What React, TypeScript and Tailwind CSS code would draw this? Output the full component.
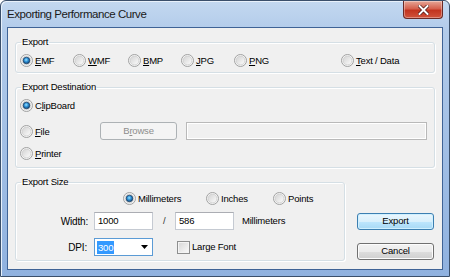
import React, { useId } from "react";

function Radio({ checked }: { checked?: boolean }) {
  const id = useId().replace(/[^a-zA-Z0-9]/g, "");
  return (
    <svg width="13" height="13" viewBox="0 0 13 13" className="shrink-0">
      <defs>
        <linearGradient id={`g${id}`} x1="0" y1="0" x2="1" y2="1">
          <stop offset="0" stopColor="#d2d2d2" />
          <stop offset="1" stopColor="#fdfdfd" />
        </linearGradient>
        <radialGradient id={`d${id}`} cx="0.45" cy="0.4" r="0.65">
          <stop offset="0" stopColor="#9be6ff" />
          <stop offset="0.45" stopColor="#2d8fd6" />
          <stop offset="1" stopColor="#0e3763" />
        </radialGradient>
      </defs>
      <circle cx="6.5" cy="6.5" r="6" fill="#f6f6f6" stroke="#a0a1a1" />
      <circle cx="6.5" cy="6.5" r="4.4" fill={`url(#g${id})`} stroke="#cdcdcd" strokeWidth="0.8" />
      {checked && <circle cx="6.5" cy="6.5" r="3.3" fill={`url(#d${id})`} stroke="#183d63" strokeWidth="0.7" />}
    </svg>
  );
}

function RadioItem({ checked, children, w }: { checked?: boolean; children: React.ReactNode; w: string }) {
  return (
    <div className={`flex items-center gap-[2px] h-[13px] shrink-0 ${w}`}>
      <Radio checked={checked} />
      <span className="leading-[13px]">{children}</span>
    </div>
  );
}

function Group({ title, className, children }: { title: string; className: string; children?: React.ReactNode }) {
  return (
    <fieldset
      className={`border border-[#d5dfe5] rounded-[3px] shadow-[inset_1px_1px_0_#ffffff,1px_1px_0_#ffffff] ${className}`}
    >
      <legend className="ml-[5px] px-[1px] leading-[12px]">{title}</legend>
      {children}
    </fieldset>
  );
}

function TextBox({ value, w }: { value: string; w: string }) {
  return (
    <div
      className={`h-[18px] ${w} bg-white border border-[#c5cad2] border-t-[#abadb3] flex items-center pl-[3px] shrink-0`}
    >
      {value}
    </div>
  );
}

export default function App() {
  return (
    <div className="w-[450px] h-[277px] bg-white font-['Liberation_Sans',Arial,sans-serif] text-[9.5px] tracking-[-0.2px] text-black">
      <div className="w-full h-full flex flex-col rounded-t-[6px] border border-[#3a4f6b] bg-[linear-gradient(to_bottom,#c3d8f0_0px,#b2cbea_30px,#8fb1df_277px)] shadow-[inset_1px_1px_0_#e8f1fb]">
        {/* Title bar */}
        <div className="h-[26px] flex items-start justify-between shrink-0">
          <div className="self-center ml-[6px] text-[11.5px] tracking-[-0.45px] text-[#1a1a1a] leading-[14px]">
            Exporting Performance Curve
          </div>
          <div className="mr-[6px] w-[40px] h-[18px] rounded-b-[4px] border border-t-0 border-[#6a2a26] bg-[linear-gradient(to_bottom,#e6a797_0%,#d5604d_45%,#c2341f_55%,#d0533b_100%)] flex items-center justify-center shadow-[inset_0_0_0_1px_rgba(255,255,255,0.35)]">
            <svg width="11" height="10" viewBox="0 0 11 10">
              <path d="M1.5 1 L9.5 9 M9.5 1 L1.5 9" stroke="#4a1410" strokeWidth="3.4" strokeLinecap="square" />
              <path d="M1.5 1 L9.5 9 M9.5 1 L1.5 9" stroke="#ffffff" strokeWidth="2" strokeLinecap="square" />
            </svg>
          </div>
        </div>
        {/* Client */}
        <div className="flex-1 mx-[6px] mb-[6px] border border-[#3f6396] bg-[#f0f0f0] flex flex-col px-[7px] pt-[8px]">
          <Group title="Export" className="h-[37px] shrink-0">
            <div className="flex mt-[6px] pl-[4px]">
              <RadioItem checked w="w-[53px]"><u>E</u>MF</RadioItem>
              <RadioItem w="w-[55px]"><u>W</u>MF</RadioItem>
              <RadioItem w="w-[53px]"><u>B</u>MP</RadioItem>
              <RadioItem w="w-[53px]"><u>J</u>PG</RadioItem>
              <RadioItem w="w-[107px]"><u>P</u>NG</RadioItem>
              <RadioItem w="w-[80px]"><u>T</u>ext / Data</RadioItem>
            </div>
          </Group>
          <Group title="Export Destination" className="h-[87px] mt-[8px] shrink-0">
            <div className="flex flex-col pl-[4px]">
              <div className="mt-[6px]">
                <RadioItem checked w="w-[80px]">C<u>l</u>ipBoard</RadioItem>
              </div>
              <div className="flex items-center mt-[10px] h-[18px]">
                <RadioItem w="w-[80px]"><u>F</u>ile</RadioItem>
                <div className="w-[77px] h-[18px] rounded-[3px] border border-[#adb2b5] bg-[#f4f4f4] text-[#8d8d8d] flex items-center justify-center shrink-0">
                  B<u>r</u>owse
                </div>
                <div className="ml-[9px] w-[241px] h-[18px] border border-[#b9b9b9] bg-[#f0f0f0] shadow-[inset_0_0_0_1px_#ffffff]" />
              </div>
              <div className="mt-[7px]">
                <RadioItem w="w-[80px]"><u>P</u>rinter</RadioItem>
              </div>
            </div>
          </Group>
          <div className="flex mt-[8px]">
            <Group title="Export Size" className="h-[85px] w-[330px] shrink-0">
              <div className="flex flex-col">
                <div className="flex mt-[4px] pl-[107px]">
                  <RadioItem checked w="w-[83px]">Millimeters</RadioItem>
                  <RadioItem w="w-[67px]">Inches</RadioItem>
                  <RadioItem w="w-[60px]">Points</RadioItem>
                </div>
                <div className="flex items-center mt-[7px] h-[18px]">
                  <div className="w-[72px] text-right text-[10px] shrink-0">Width:</div>
                  <div className="ml-[6px]"><TextBox value="1000" w="w-[59px]" /></div>
                  <div className="ml-[10px] w-[12px] text-[#333]">/</div>
                  <TextBox value="586" w="w-[59px]" />
                  <div className="ml-[8px]">Millimeters</div>
                </div>
                <div className="flex items-center mt-[8px] h-[18px]">
                  <div className="w-[71px] text-right text-[10px] shrink-0">DPI:</div>
                  <div className="ml-[7px] w-[59px] h-[18px] bg-white border border-[#5b9bd5] flex items-center shrink-0">
                    <span className="ml-[2px] bg-[#3399ff] text-white px-[1px] leading-[13px]">300</span>
                    <svg className="ml-auto mr-[4px]" width="7" height="4" viewBox="0 0 7 4">
                      <path d="M0 0 H7 L3.5 4 Z" fill="#000" />
                    </svg>
                  </div>
                  <div className="ml-[24px] w-[13px] h-[13px] border border-[#8e8f8f] bg-[linear-gradient(135deg,#d6d6d6,#fbfbfb)] shadow-[inset_0_0_0_1px_#f4f4f4] shrink-0" />
                  <div className="ml-[2px]">Large Font</div>
                </div>
              </div>
            </Group>
            <div className="flex flex-col ml-[12px] pt-[37px] gap-[13px]">
              <div className="w-[77px] h-[17px] rounded-[3px] border border-[#3c7fb1] bg-[linear-gradient(to_bottom,#eaf6fd_0%,#d9f0fc_50%,#bee6fd_51%,#a7d9f5_100%)] shadow-[inset_0_0_0_1px_#d0f0ff] flex items-center justify-center">
                Export
              </div>
              <div className="w-[77px] h-[17px] rounded-[3px] border border-[#707070] bg-[linear-gradient(to_bottom,#f2f2f2_0%,#ebebeb_50%,#dddddd_51%,#cfcfcf_100%)] shadow-[inset_0_0_0_1px_#fcfcfc] flex items-center justify-center">
                Cancel
              </div>
            </div>
          </div>
        </div>
      </div>
    </div>
  );
}
